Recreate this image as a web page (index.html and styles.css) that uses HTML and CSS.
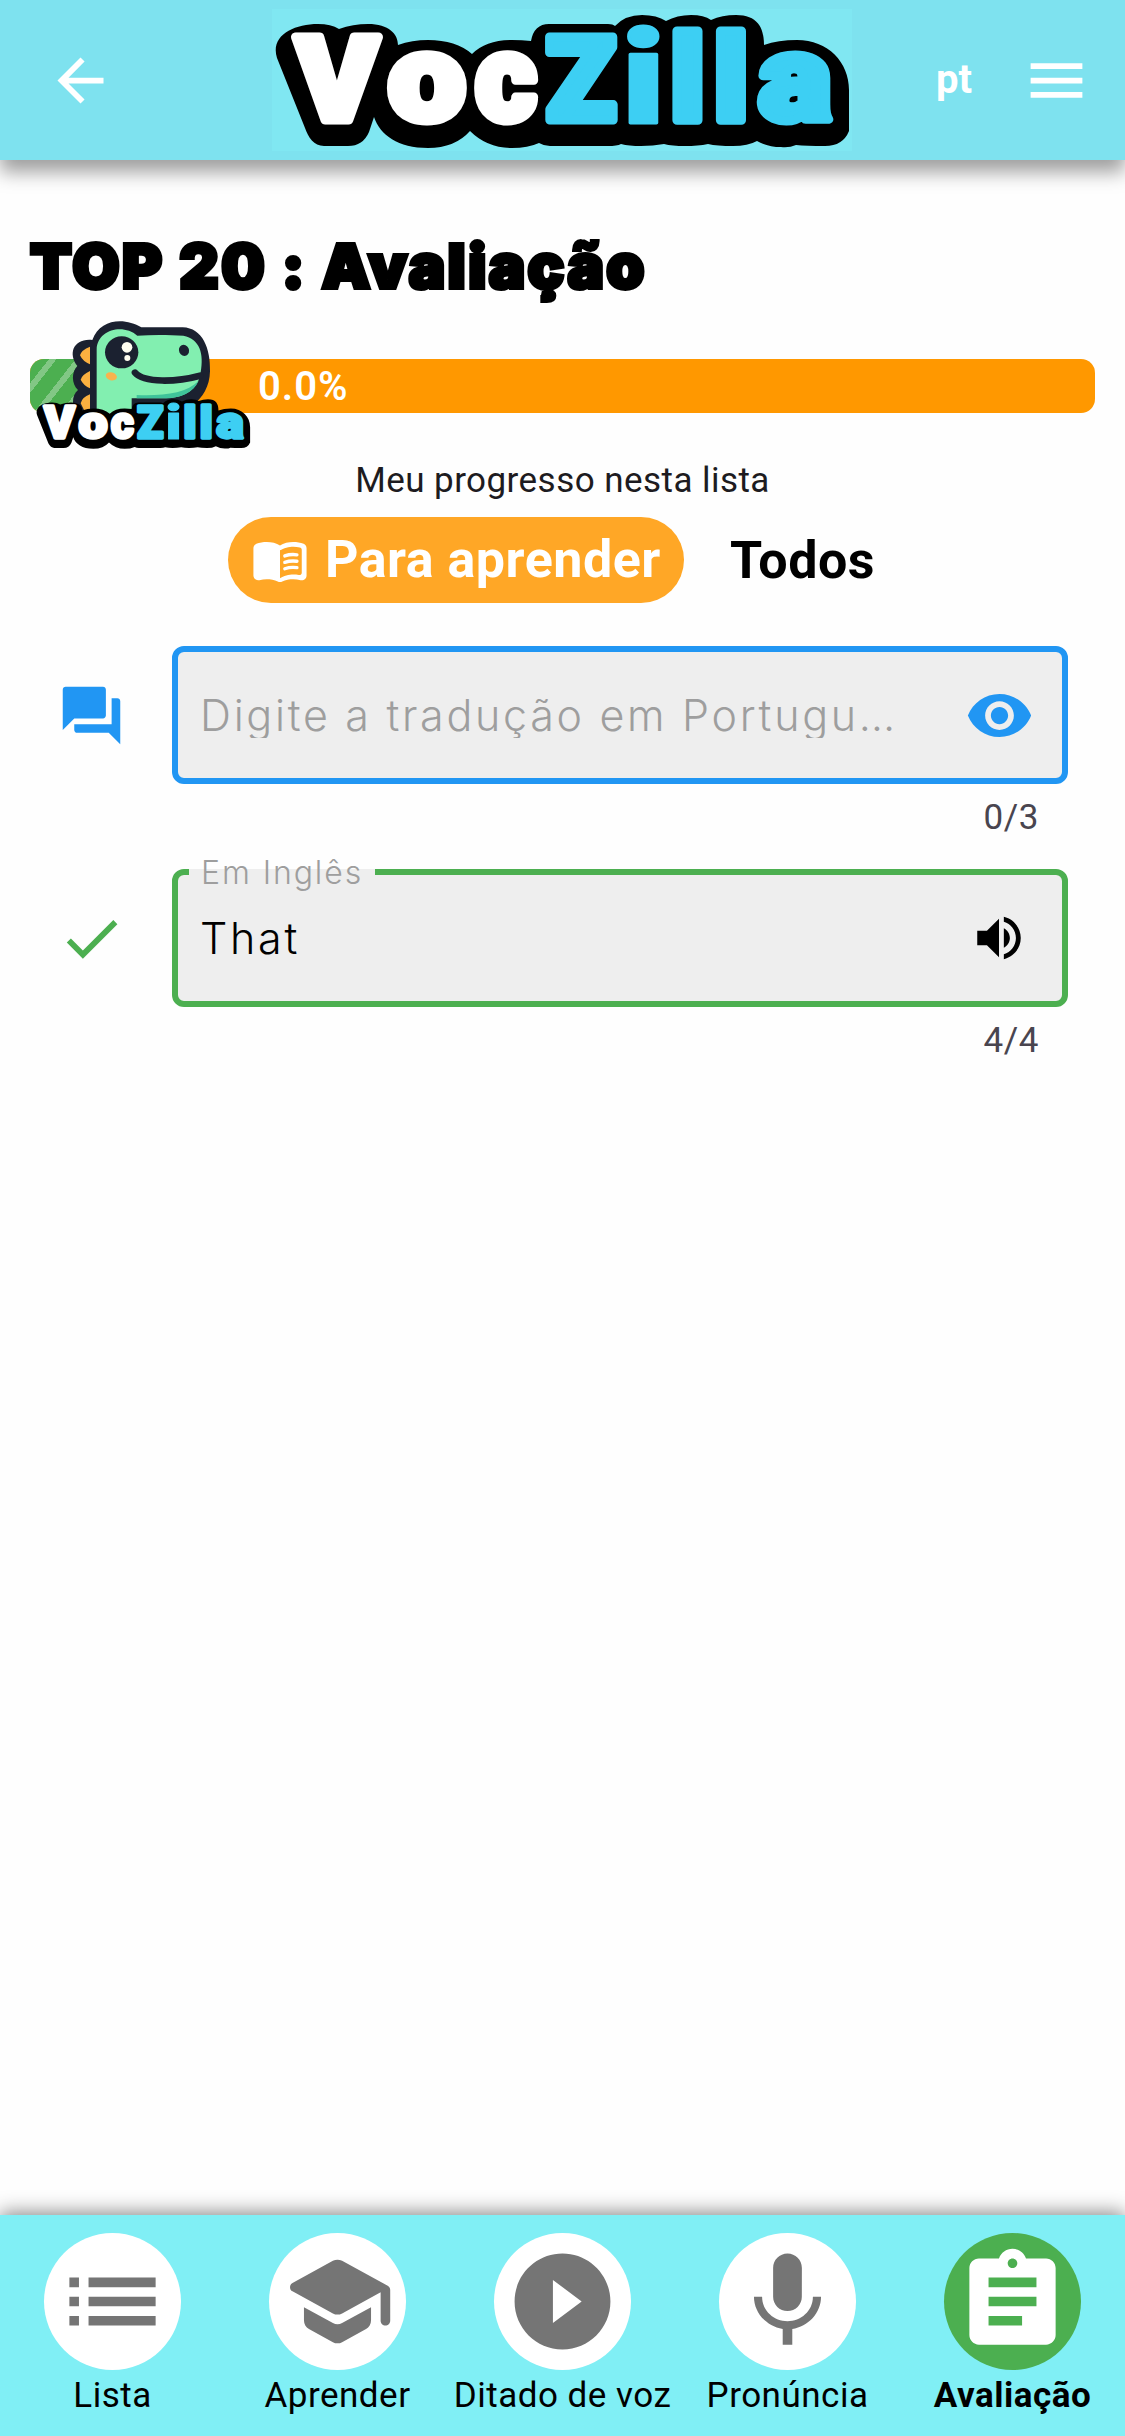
FILE: index.html
```html
<!DOCTYPE html>
<html lang="pt">
<head>
<meta charset="utf-8">
<title>VocZilla</title>
<link rel="stylesheet" href="styles.css">
</head>
<body>
<header class="topbar">
  <svg class="icon" viewBox="0 0 24 24"><path d="M20 11H7.830l5.590-5.590L12 4l-8 8 8 8 1.410-1.410L7.830 13H20v-2z"/></svg>
  <svg class="logo" viewBox="272 9 580 142">
    <g id="wordmark">
      <path class="logo-base" d="M277 58C270 36 293 24 318 24Q331 24 339 29Q353 24 368 24C389 24 398 34 398 45Q412 40 428 40Q456 40 472 54Q486 40 512 40Q522 40 531 41Q534 24 549 24H608Q613 24 615 26Q625 15 642 15Q657 15 666 21Q677 15 691 15Q704 15 711 20Q722 15 736 15C757 15 764 27 764 45Q778 40 797 40C828 40 849 62 849 90V131Q843 146 825 146Q806 146 796 145Q789 148 781 147Q768 147 757 141Q748 146 733 146Q717 146 708 144Q698 146 685 146Q672 146 664 144Q653 146 641 146Q629 146 621 144Q617 146 608 146H550Q544 146 539 143Q528 148 512 148Q487 148 470 131Q455 148 428 148C398 148 380 135 374 117L369 132Q363 146 348 146H324C314 146 308 137 305 128Z"/>
      <g class="letters-white">
        <text transform="translate(337 119.500) scale(1.06 1)" font-size="117">V</text>
        <text transform="translate(427 119.500) scale(1.13 1)" font-size="121">o</text>
        <text transform="translate(506 119.500) scale(.97 1)" font-size="121">c</text>
      </g>
      <g class="letters-blue">
        <text transform="translate(581 119.500) scale(.98 1)" font-size="117">Z</text>
        <text class="letter-i" transform="translate(643.500 122.500) scale(1.22 1)" font-size="129">i</text>
        <text transform="translate(687.500 119.500) scale(1.05 1)" font-size="119">l</text>
        <text transform="translate(731 119.500) scale(1.05 1)" font-size="119">l</text>
        <text transform="translate(795 119.500) scale(1.13 1)" font-size="121">a</text>
      </g>
    </g>
  </svg>
  <span class="lang">pt</span>
  <svg class="icon" viewBox="0 0 24 24"><path d="M3 18h18v-2H3v2zm0-5h18v-2H3v2zm0-7v2h18V6H3z"/></svg>
</header>

<main class="content">
  <h1 class="title">TOP 20 : Avaliação</h1>
  <div class="progress">
    <div class="progress-done"></div>
    <span class="progress-value">0.0%</span>
    <svg class="mascot" viewBox="0 0 720 450">
      <path fill="#1b2130" d="M175 310C156 296 152 258 174 240C154 222 154 186 172 168C142 130 162 84 217 90C240 24 316 22 364 52H488C548 54 572 116 570 184C569 230 548 262 520 285V310Z"/>
      <path fill="#82efb0" d="M230 310V118C232 58 310 40 352 77C400 74 450 75 490 77C540 88 552 130 542 187L537 208C520 250 480 265 430 265H335V310Z"/>
      <path fill="#3fc39a" d="M536 212C500 250 430 258 350 255V265H430C484 265 520 248 536 212Z"/>
      <path class="smile" d="M345 188C372 220 470 216 540 197"/>
      <path fill="#fbb040" d="M210 110Q184 120 180 136Q188 154 210 163ZM210 183Q186 194 182 209Q190 226 210 235ZM210 253Q186 262 182 280L192 300H210Z"/>
      <ellipse cx="305" cy="127" rx="50" ry="48" fill="#1b2130"/>
      <circle cx="321" cy="112" r="16" fill="#fffdf0"/>
      <circle cx="322" cy="144" r="9" fill="#fffdf0"/>
      <ellipse cx="492" cy="121" rx="15" ry="17" transform="rotate(-25 492 121)" fill="#1b2130"/>
      <ellipse cx="274" cy="199" rx="17" ry="12" transform="rotate(15 274 199)" fill="#f9b24e"/>
      <use href="#wordmark" transform="translate(-258 251) scale(1.117)"/>
    </svg>
  </div>
  <p class="caption">Meu progresso nesta lista</p>
  <div class="filters">
    <div class="chip">
      <svg class="icon-book" viewBox="0 0 24 24"><path d="M17.500 4.500c-1.950 0-4.050.4-5.500 1.500-1.450-1.100-3.550-1.500-5.500-1.500-1.450 0-2.990.22-4.280.79C1.490 5.620 1 6.330 1 7.140v11.280c0 1.300 1.220 2.260 2.480 1.940.98-.25 2.020-.36 3.020-.36 1.560 0 3.220.26 4.560.92.6.3 1.280.3 1.870 0 1.340-.67 3-.92 4.560-.92 1 0 2.040.11 3.020.36 1.260.33 2.480-.63 2.480-1.940V7.140c0-.81-.49-1.520-1.220-1.850-1.280-.57-2.820-.79-4.270-.79zM21 17.230c0 .63-.58 1.090-1.200.98-.75-.14-1.530-.2-2.300-.2-1.700 0-4.150.65-5.500 1.500V8c1.350-.85 3.800-1.500 5.500-1.500.92 0 1.830.09 2.700.28.46.1.8.51.8.98v9.470z"/><path class="book-lines" d="M14 10.300Q16.300 9.500 19 9.850M14 12.960Q16.300 12.160 19 12.510M14 15.620Q16.300 14.820 19 15.170"/></svg>
      <span>Para aprender</span>
    </div>
    <div class="chip-plain">Todos</div>
  </div>

  <div class="row">
    <svg class="icon blue" viewBox="0 0 24 24"><path d="M21 6h-2v9H6v2c0 .55.45 1 1 1h11l4 4V7c0-.55-.45-1-1-1zm-4 6V3c0-.55-.45-1-1-1H3c-.55 0-1 .45-1 1v14l4-4h10c.55 0 1-.45 1-1z"/></svg>
    <div class="field field-blue">
      <span class="placeholder">Digite a tradução em Portugu…</span>
      <svg class="icon blue" viewBox="0 0 24 24"><path d="M12 4.500C7 4.500 2.730 7.610 1 12c1.730 4.390 6 7.500 11 7.500s9.270-3.110 11-7.500c-1.730-4.390-6-7.500-11-7.500zM12 17c-2.760 0-5-2.240-5-5s2.240-5 5-5 5 2.240 5 5-2.240 5-5 5zm0-8c-1.660 0-3 1.340-3 3s1.340 3 3 3 3-1.340 3-3-1.340-3-3-3z"/></svg>
    </div>
  </div>
  <div class="counter">0/3</div>
  <div class="row">
    <svg class="icon green" viewBox="0 0 24 24"><path d="M9 16.170L4.830 12l-1.420 1.410L9 19 21 7l-1.410-1.410z"/></svg>
    <div class="field field-green">
      <span class="label">Em Inglês</span>
      <span class="value">That</span>
      <svg class="icon speaker" viewBox="0 0 24 24"><path d="M3 9v6h4l5 5V4L7 9H3zm13.500 3c0-1.770-1.020-3.290-2.500-4.030v8.050c1.480-.73 2.500-2.250 2.500-4.020zM14 3.230v2.060c2.890.86 5 3.540 5 6.710s-2.110 5.850-5 6.710v2.060c4.010-.91 7-4.490 7-8.770s-2.990-7.860-7-8.770z"/></svg>
    </div>
  </div>
  <div class="counter">4/4</div>
</main>

<nav class="tabs">
  <div class="tab"><div class="disc"><svg viewBox="0 0 24 24"><path d="M3 13h2v-2H3v2zm0 4h2v-2H3v2zm0-8h2V7H3v2zm4 4h14v-2H7v2zm0 4h14v-2H7v2zM7 7v2h14V7H7z"/></svg></div><span>Lista</span></div>
  <div class="tab"><div class="disc"><svg viewBox="0 0 24 24"><path d="M5 13.180v2.810c0 .73.4 1.410 1.040 1.760l5 2.730c.6.33 1.320.33 1.920 0l5-2.730c.64-.35 1.040-1.030 1.040-1.760v-2.810l-6.040 3.300c-.6.33-1.320.33-1.920 0L5 13.180zm6.040-9.660l-8.430 4.600c-.69.38-.69 1.380 0 1.760l8.430 4.600c.6.33 1.320.33 1.920 0L21 10.090V16c0 .55.45 1 1 1s1-.45 1-1V9.590c0-.37-.2-.7-.52-.88l-9.520-5.190c-.6-.32-1.320-.32-1.920 0z"/></svg></div><span>Aprender</span></div>
  <div class="tab"><div class="disc"><svg viewBox="0 0 24 24"><path d="M12 2C6.480 2 2 6.480 2 12s4.480 10 10 10 10-4.480 10-10S17.520 2 12 2zm-2 14.500v-9l6 4.500-6 4.500z"/></svg></div><span>Ditado de voz</span></div>
  <div class="tab"><div class="disc"><svg viewBox="0 0 24 24"><path d="M12 14c1.660 0 2.990-1.340 2.990-3L15 5c0-1.660-1.340-3-3-3S9 3.340 9 5v6c0 1.660 1.340 3 3 3zm5.300-3c0 3-2.540 5.100-5.300 5.100S6.700 14 6.700 11H5c0 3.410 2.720 6.230 6 6.720V21h2v-3.280c3.280-.48 6-3.300 6-6.720h-1.700z"/></svg></div><span>Pronúncia</span></div>
  <div class="tab active"><div class="disc"><svg viewBox="0 0 24 24"><path d="M19 3h-4.180C14.400 1.840 13.300 1 12 1c-1.300 0-2.400.84-2.820 2H5c-1.100 0-2 .9-2 2v14c0 1.100.9 2 2 2h14c1.100 0 2-.9 2-2V5c0-1.100-.9-2-2-2zm-7 0c.55 0 1 .45 1 1s-.45 1-1 1-1-.45-1-1 .45-1 1-1zm2 14H7v-2h7v2zm3-4H7v-2h10v2zm0-4H7V7h10v2z"/></svg></div><span>Avaliação</span></div>
</nav>
</body>
</html>
```
FILE: styles.css
```css
* { box-sizing: border-box; }

body {
  margin: 0;
  width: 1125px;
  height: 2436px;
  display: flex;
  flex-direction: column;
  overflow: hidden;
  background: #fefefe;
  color: #000;
  font-family: Roboto, sans-serif;
}

svg { display: block; flex: none; fill: currentColor; }
.icon { width: 69px; height: 69px; }
.blue { color: #2196f3; }
.green { color: #4caf50; }

/* Top bar */
.topbar {
  flex: none;
  height: 160px;
  display: flex;
  align-items: center;
  padding: 0 34px 0 46px;
  background: #7ee2ef;
  color: #fff;
  box-shadow: 0 12px 18px rgba(0, 0, 0, .38);
}
.logo { width: 580px; height: 142px; margin-left: 157px; overflow: visible; background: #80e7f2; }
.logo-base { fill: #000; }
.letters-white, .letters-blue {
  font-family: Roboto, sans-serif;
  font-weight: 900;
  text-anchor: middle;
  stroke-width: 9;
  stroke-linejoin: round;
}
.letters-white { fill: #fff; stroke: #fff; }
.letters-blue { fill: #3dcff3; stroke: #3dcff3; }
.letter-i { stroke-width: 3; }
.lang { width: 103px; margin-left: 84px; font-size: 40px; font-weight: 700; line-height: 60px; }
.topbar .lang + .icon { margin-left: -17px; }

/* Page content */
.content { flex: 1; padding: 66px 30px 0; }
.title {
  margin: 0;
  height: 80px;
  font: 900 61px/80px Inter, sans-serif;
  letter-spacing: 2.5px;
  white-space: nowrap;
  -webkit-text-stroke: 4px #000;
  paint-order: stroke;
  stroke-linejoin: round;
}
.progress {
  position: relative;
  height: 54px;
  margin-top: 53px;
  display: flex;
  align-items: center;
  border-radius: 14px;
  background: #ff9800;
  color: #fff;
}
.progress-done {
  width: 110px;
  height: 54px;
  border-radius: 14px 0 0 14px;
  background: repeating-linear-gradient(128deg, #4caf50 0 15px, #82c785 15px 21px);
}
.progress-value { margin-left: 118px; font-size: 40px; font-weight: 600; letter-spacing: 1px; }
.mascot { position: absolute; left: -10px; top: -49px; width: 240px; height: 150px; overflow: visible; }
.smile { fill: none; stroke: #1b2130; stroke-width: 20; stroke-linecap: round; }
.caption {
  margin: 43px 0 0;
  height: 50px;
  font-size: 35px;
  line-height: 50px;
  letter-spacing: .45px;
  text-align: center;
  color: #1d1b20;
}
.filters { display: flex; margin: 11px 0 0 198px; height: 86px; font-size: 52px; font-weight: 700; line-height: 88px; letter-spacing: .5px; }
.chip { display: flex; align-items: center; width: 456px; padding-left: 23px; gap: 16px; border-radius: 43px; background: #ffa726; color: #fff; white-space: nowrap; }
.chip-plain { margin-left: 46px; }
.icon-book { width: 58px; height: 58px; }
.book-lines { fill: none; stroke: currentColor; stroke-width: 1.4; stroke-linecap: round; }

/* Inputs */
.row { display: flex; align-items: center; margin-top: 43px; padding-left: 27px; gap: 46px; }
.field {
  position: relative;
  display: flex;
  align-items: center;
  justify-content: space-between;
  width: 896px;
  height: 138px;
  padding: 0 28px 0 22px;
  border: 6px solid;
  border-radius: 12px;
  background: #eee;
  font-family: Inter, sans-serif;
  font-size: 43px;
  font-weight: 350;
  letter-spacing: 2.7px;
}
.field-blue { border-color: #2196f3; }
.field-green { border-color: #4caf50; }
.placeholder { height: 46px; overflow: hidden; line-height: 47px; color: #9e9e9e; white-space: nowrap; }
.value { line-height: 50px; }
.speaker { width: 58px; height: 58px; margin-right: 6px; }
.label {
  position: absolute;
  left: 11px;
  top: -22px;
  width: 186px;
  padding-left: 12px;
  font-size: 32px;
  line-height: 40px;
  letter-spacing: 1.9px;
  white-space: nowrap;
  color: #9e9e9e;
  background: linear-gradient(#fefefe 16px, #eee 16px);
}
.counter { height: 43px; margin: 12px 56px 0 0; font-size: 35px; line-height: 43px; letter-spacing: .6px; text-align: right; color: #49454f; }
.counter + .row { margin-top: 30px; }

/* Bottom navigation */
.tabs {
  flex: none;
  display: grid;
  grid-template-columns: repeat(5, 225px);
  height: 221px;
  padding-top: 18px;
  background: #80eff5;
  box-shadow: 0 -3px 18px rgba(0, 0, 0, .45);
}
.tab { display: flex; flex-direction: column; align-items: center; font-size: 35px; line-height: 51px; letter-spacing: .5px; white-space: nowrap; }
.disc { display: flex; align-items: center; justify-content: center; width: 137px; height: 137px; border-radius: 50%; background: #fff; color: #757575; }
.disc svg { width: 115px; height: 115px; }
.active { font-weight: 700; }
.active .disc { background: #4caf50; color: #fff; }
```
